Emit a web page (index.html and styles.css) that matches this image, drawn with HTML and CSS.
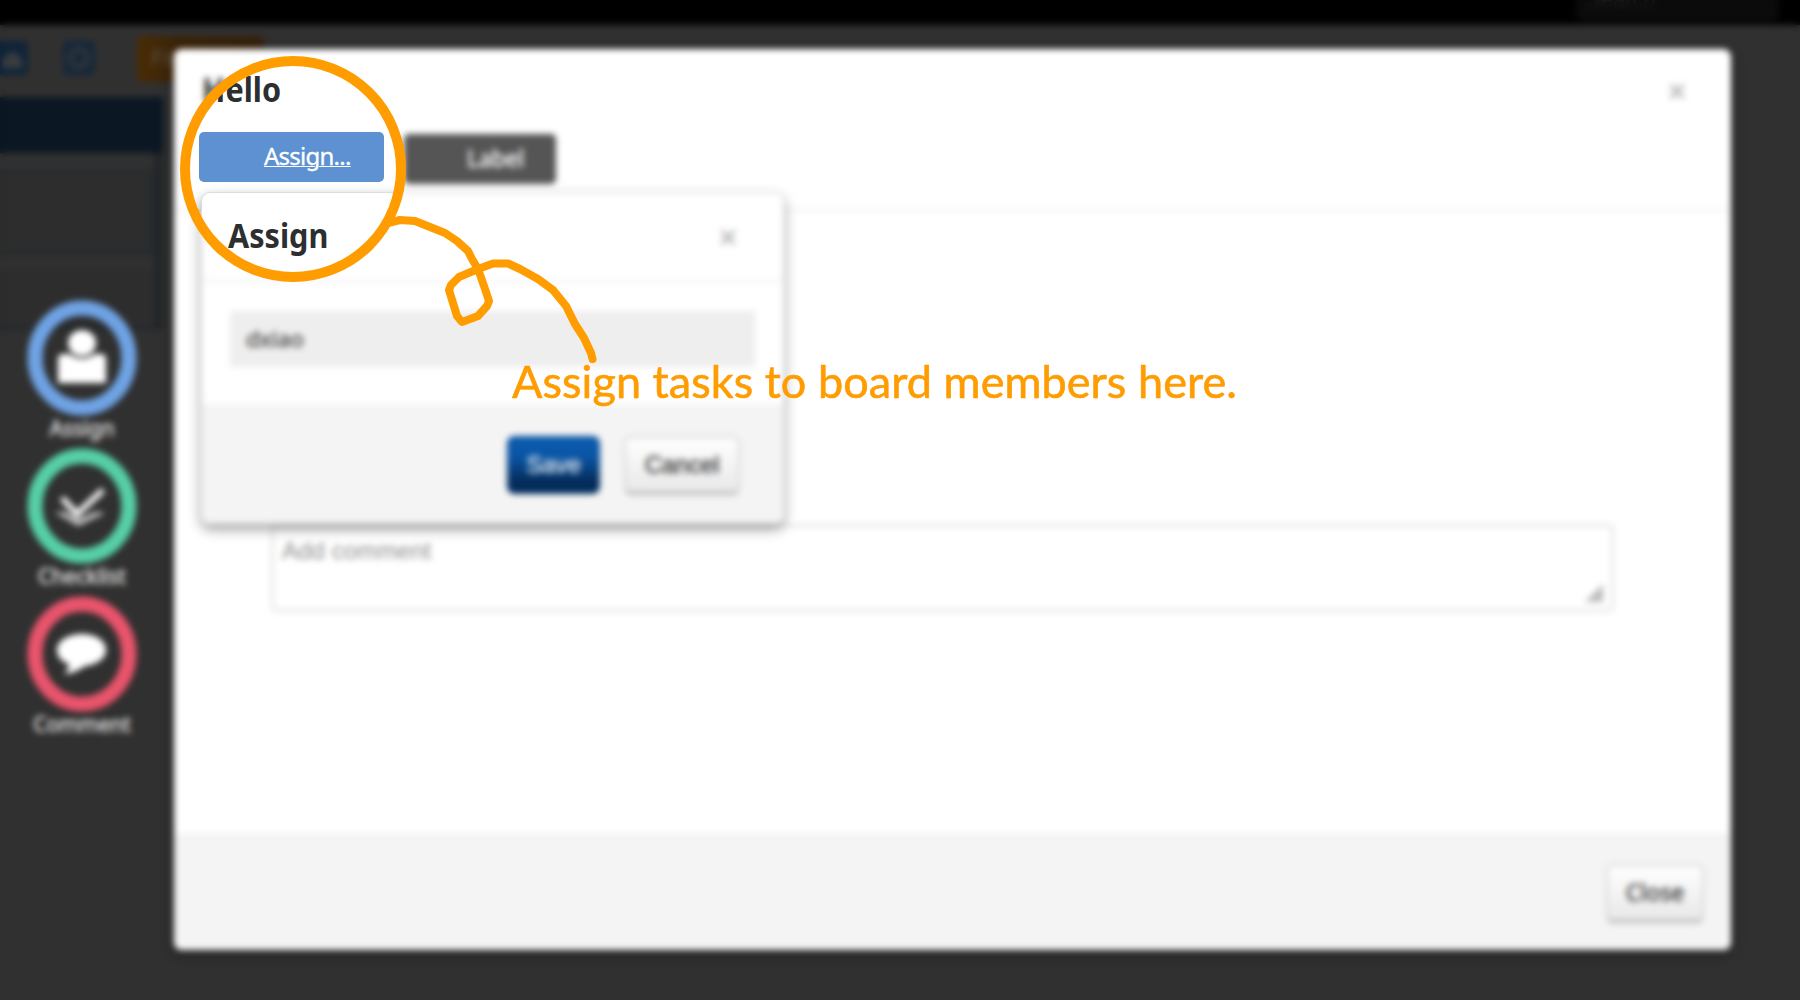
FILE: index.html
```
<!DOCTYPE html>
<html lang="en">
<head>
<meta charset="utf-8">
<title>Board tour</title>
<link rel="stylesheet" href="styles.css">
</head>
<body>
<div class="app">
  <header class="topbar"><div class="search">Search</div></header>
  <div class="toolbar">
    <svg class="tool" viewBox="0 0 32 34"><rect width="32" height="34" rx="5" fill="#102438"/><path d="M7 17h19v10H7zM11 12h11v5H11z" fill="#3a3d40"/></svg>
    <svg class="tool" viewBox="0 0 32 34"><rect width="32" height="34" rx="5" fill="#14273a"/><circle cx="16" cy="17" r="8" fill="none" stroke="#343638" stroke-width="4"/><path d="M16 4v5M16 25v5M3 17h5M24 17h5M7 8l3 3M22 23l3 3M25 8l-3 3M10 23l-3 3" stroke="#343638" stroke-width="3"/></svg>
    <div class="filter">Filter</div>
  </div>
  <section class="column">
    <div class="column-head"></div>
    <div class="card"></div>
    <div class="card card-plain"></div>
  </section>
</div>

<nav class="features">
  <div class="feature">
    <svg viewBox="0 0 110 116"><ellipse cx="55" cy="58" rx="47" ry="50" fill="none" stroke="#6fa3e5" stroke-width="15"/><path d="M31 59q0-5 5-5h6q13 9 26 0h6q5 0 5 5v24H31z" fill="#fff"/><ellipse cx="55" cy="43" rx="14" ry="13" fill="#fff"/></svg>
    <span>Assign</span>
  </div>
  <div class="feature">
    <svg viewBox="0 0 110 116"><ellipse cx="55" cy="58" rx="47" ry="50" fill="none" stroke="#56cfa7" stroke-width="15"/><path d="M35 50l15 16 26-24" fill="none" stroke="#f4f4f4" stroke-width="6"/><path d="M31 65h7l13 7 17-7h8l-25 12z" fill="#bbb" stroke="#bbb" stroke-width="2"/></svg>
    <span>Checklist</span>
  </div>
  <div class="feature">
    <svg viewBox="0 0 110 116"><ellipse cx="55" cy="58" rx="47" ry="50" fill="none" stroke="#e9546c" stroke-width="15"/><path d="M55 38c14 0 24 7 24 16S69 69 58 70q-9 7-21 8 5-5 5-10c-8-2-12-8-12-14 0-9 11-16 25-16z" fill="#fff"/></svg>
    <span>Comment</span>
  </div>
</nav>

<main class="modal">
  <header class="modal-head">
    <div class="title-row"><h1 class="title"><span class="fit fit-hello">Hello</span></h1><span class="close">×</span></div>
    <div class="actions">
      <a class="action action-assign">Assign...</a>
      <a class="action action-label">Label</a>
    </div>
  </header>
  <div class="modal-body">
    <div class="comment"><span>Add comment</span><svg class="grip" viewBox="0 0 18 18"><path d="M18 0v18H0z" fill="#bbb"/></svg></div>
  </div>
  <footer class="modal-foot"><button class="btn btn-close">Close</button></footer>

  <section class="popover">
    <header class="pop-head"><h2 class="title"><span class="fit fit-assign">Assign</span></h2><span class="close">×</span></header>
    <div class="pop-body"><div class="member">dxiao</div></div>
    <footer class="pop-foot">
      <button class="btn btn-save">Save</button>
      <button class="btn btn-cancel">Cancel</button>
    </footer>
  </section>
</main>

<div class="veil"></div>
<svg class="pointer" viewBox="0 0 1800 1000">
  <circle cx="293" cy="169" r="108" stroke-width="10"/>
  <path stroke-width="8" d="M388 223L400 220L415 221L430 227L445 233L457 241L468 251L472 259L478 269L484 286L489 301L487 306L478 316L462 322L457 316L449 290L451 285L459 277L478 269L493 263.500H508L520 269L538 279L553 290L566 306L575 324L584 338L591 353L592.500 359"/>
</svg>
<p class="hint">Assign tasks to board members here.</p>
</body>
</html>
```
FILE: styles.css
```
* { box-sizing: border-box; }
body {
  margin: 0;
  width: 1800px;
  height: 1000px;
  overflow: hidden;
  position: relative;
  background: #303030;
  color: #2c2e2f;
  font-family: "Noto Sans", "Open Sans", sans-serif;
}
h1, h2, p { margin: 0; }
.fit { display: inline-block; transform-origin: 0 50%; white-space: nowrap; }

.topbar { height: 25px; background: #000; display: flex; justify-content: flex-end; padding-right: 21px; }
.search {
  width: 203px; height: 21px; padding-left: 10px; border-radius: 0 0 8px 8px;
  background: #0b0b0b; color: #1c1c1c;
  font: 22px "Liberation Sans", sans-serif; line-height: 0;
}
.toolbar { height: 72px; padding-top: 11px; display: flex; align-items: flex-start; }
.tool { width: 32px; height: 34px; margin: 5px 35px 0 0; flex: none; }
.tool:first-child { margin-left: -4px; }
.filter {
  width: 127px; height: 46px; margin-left: 7px; padding-left: 14px; border-radius: 5px;
  background: linear-gradient(90deg, #4a2c04, #3a2409 30%, #33200c);
  color: #5a5040; font-size: 22px; line-height: 42px;
}
.column { width: 163px; height: 233px; border-right: 9px solid #222628; border-bottom: 5px solid #24282b; background: #303030; }
.column-head { height: 56px; width: 163px; background: #0b1722; }
.card { width: 153px; height: 85px; margin-top: 17px; border: 4px solid #252a2d; border-left: 0; background: #2d2d2d; }
.card-plain { height: 57px; margin-top: 14px; border-color: #2c2d2e; border-bottom: 0; }

.features { position: absolute; left: 17px; top: 300px; width: 130px; display: flex; flex-direction: column; }
.feature { height: 148px; display: flex; flex-direction: column; align-items: center; color: #e4e4e4; font-size: 21px; line-height: 24px; }
.feature svg { width: 110px; height: 116px; flex: none; }
.feature span { white-space: nowrap; -webkit-text-stroke: .5px #e4e4e4; }

.modal {
  position: absolute; left: 174px; top: 49px; width: 1557px; height: 901px;
  display: flex; flex-direction: column;
  background: #fff; border-radius: 8px; box-shadow: 0 4px 14px rgba(0, 0, 0, .35);
}
.modal-head { height: 162px; padding: 18px 45px 0 25px; border-bottom: 2px solid #f0f0f0; }
.title-row { display: flex; justify-content: space-between; height: 65px; padding-left: 3px; }
.title { font-size: 34px; line-height: 44px; font-weight: 700; }
.close { color: #bbb; font: 700 31px/49px "Liberation Sans", sans-serif; }
.actions { display: flex; gap: 20px; }
.action { height: 50px; border-radius: 5px; color: #fff; font-size: 23px; line-height: 48px; }
.action-assign { width: 185px; padding-left: 65px; background: #5d91d1; text-decoration: underline; text-decoration-thickness: 1px; font-size: 24px; letter-spacing: -.75px; -webkit-text-stroke: .3px #fff; }
.action-label { width: 152px; padding-left: 63px; margin-top: 2px; background: #555; letter-spacing: -.2px; -webkit-text-stroke: .4px #fff; }
.modal-body { flex: 1; padding: 313px 117px 0 97px; }
.comment {
  height: 88px; padding: 11px 8px; display: flex; justify-content: space-between;
  border: 3px solid #e6e6e6; border-radius: 5px; color: #8f8f8f;
  font: 24px/26px "Liberation Sans", sans-serif; letter-spacing: .1px;
}
.grip { width: 18px; height: 18px; align-self: flex-end; margin: 0 0 -4px 0; }
.modal-foot { height: 117px; padding: 31px 27px 0; display: flex; justify-content: flex-end; background: #f4f4f4; border-radius: 0 0 8px 8px; }
.btn {
  height: 59px; padding: 0; border: 2px solid #d4d4d4; border-bottom: 3px solid #b4b4b4; border-radius: 7px;
  background: linear-gradient(#fff, #e8e8e8); color: #333;
  font: 24px "Liberation Sans", sans-serif; -webkit-text-stroke: .4px;
}
.btn-close { width: 98px; padding-bottom: 2px; font: 23px "Noto Sans", sans-serif; }

.popover {
  position: absolute; left: 27px; top: 143px; width: 583px; height: 332px;
  display: flex; flex-direction: column;
  background: #fff; border: 1px solid #ddd; border-radius: 9px;
  box-shadow: 0 5px 12px rgba(0, 0, 0, .4);
}
.pop-head { height: 89px; padding: 20px 46px 0 26px; display: flex; justify-content: space-between; border-bottom: 2px solid #f0f0f0; }
.pop-body { flex: 1; padding: 29px 28px 0 28px; }
.member { height: 56px; padding-left: 16px; background: #eee; color: #444; font-size: 22.5px; line-height: 55px; -webkit-text-stroke: .4px; }
.pop-foot { height: 119px; padding: 32px 43px 0; display: flex; justify-content: flex-end; gap: 24px; background: #f4f4f4; border-radius: 0 0 9px 9px; }
.btn-save { width: 93px; height: 58px; border: 1px solid #0a3f7c; background: linear-gradient(#0b5cb0, #0a55a5 35%, #042c5a 80%); color: #e4ecf6; }
.btn-cancel { width: 116px; }

/* Blurs the page everywhere except inside the highlighted circle. */
.veil {
  position: absolute; inset: 0;
  backdrop-filter: blur(3.2px);
  -webkit-mask-image: radial-gradient(circle at 293px 169px, transparent 107px, #000 108px);
  mask-image: radial-gradient(circle at 293px 169px, transparent 107px, #000 108px);
}
.pointer { position: absolute; inset: 0; width: 1800px; height: 1000px; fill: none; stroke: #ff9c00; stroke-linecap: round; stroke-linejoin: round; }
.hint { position: absolute; left: 512px; top: 348px; color: #ff9c00; font: 45px/66px Lato, sans-serif; letter-spacing: .05px; -webkit-text-stroke: .6px #ff9c00; white-space: nowrap; }

.fit-hello { transform: scaleX(.9); }
.fit-assign { transform: scaleX(.9); }
```
